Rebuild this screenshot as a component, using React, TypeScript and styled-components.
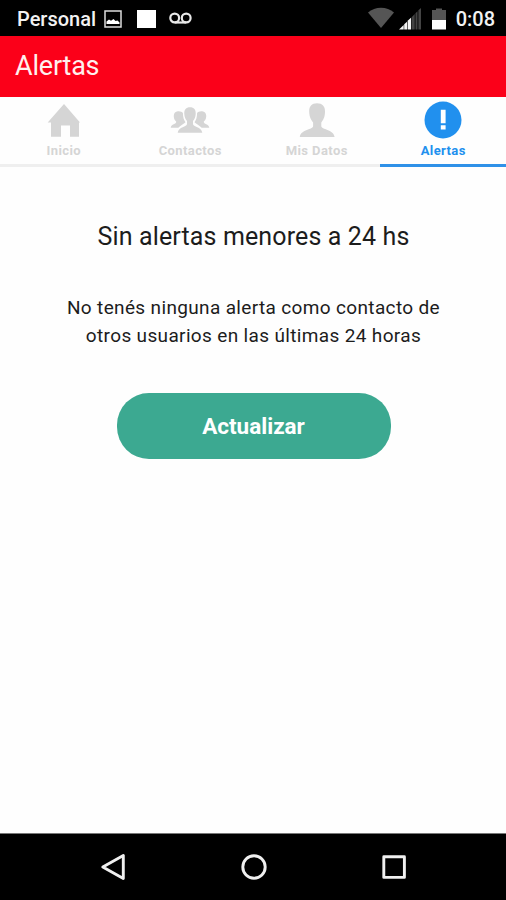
import React from "react";
import styled, { createGlobalStyle } from "styled-components";

const GlobalStyle = createGlobalStyle`
  * { box-sizing: border-box; }
  body { margin: 0; background: #fff; font-family: Roboto, sans-serif; }
`;

const Screen = styled.div`
  display: flex;
  flex-direction: column;
  width: 506px;
  height: 900px;
  overflow: hidden;
  background: #fefefe;
`;

const StatusBar = styled.div`
  display: flex;
  align-items: center;
  justify-content: space-between;
  height: 36px;
  flex: none;
  padding: 1px 11px 0 17px;
  background: #000;
  color: #f2f2f2;
`;

const StatusGroup = styled.div`
  display: flex;
  align-items: center;
`;

const StatusText = styled.span<{ $size: number; $gap?: number }>`
  margin-left: ${(p) => p.$gap ?? 0}px;
  font-size: ${(p) => p.$size}px;
  line-height: 24px;
  font-weight: 500;
  white-space: nowrap;
`;

const StatusIcon = styled.svg<{ $gap: number }>`
  display: block;
  flex: none;
  margin-left: ${(p) => p.$gap}px;
`;

const AppBar = styled.header`
  height: 61px;
  flex: none;
  padding: 14px 15px 0;
  background: #fb0019;
  color: #fff0ee;
  font-size: 27px;
  line-height: 32px;
  letter-spacing: -0.2px;
`;

const Tabs = styled.nav`
  display: grid;
  grid-template-columns: repeat(4, 1fr);
  height: 70px;
  flex: none;
`;

const Tab = styled.div<{ $active?: boolean }>`
  display: flex;
  flex-direction: column;
  align-items: center;
  padding: 3px 0 0 1px;
  color: ${(p) => (p.$active ? "#2190ee" : "#d5d5d5")};
  box-shadow: inset 0 -3px ${(p) => (p.$active ? "#2f91e8" : "#efefef")};
`;

const TabIcon = styled.svg`
  display: block;
  width: 40px;
  height: 40px;
  fill: currentColor;
`;

const TabLabel = styled.span`
  margin-top: 3px;
  font-size: 13px;
  line-height: 16px;
  font-weight: 700;
  letter-spacing: 0.4px;
`;

const Content = styled.main`
  display: flex;
  flex: 1;
  flex-direction: column;
  align-items: center;
  padding: 55px 0 0 1px;
  color: #1c1c1c;
`;

const Title = styled.h1`
  margin: 0;
  font-size: 25px;
  line-height: 30px;
  font-weight: 400;
  letter-spacing: 0.13px;
`;

const Message = styled.p`
  margin: 42px 0 0;
  font-size: 19px;
  line-height: 28px;
  letter-spacing: 0.35px;
  text-align: center;
`;

const RefreshButton = styled.button`
  width: 274px;
  height: 66px;
  margin: 43px 0 0;
  padding: 0;
  border: 0;
  border-radius: 32px;
  background: #3ca991;
  color: #fff;
  font: 700 22.5px/66px Roboto, sans-serif;
`;

const NavigationBar = styled.footer`
  display: flex;
  align-items: center;
  justify-content: space-between;
  height: 67px;
  flex: none;
  padding: 0 98px 0 100px;
  border-top: 1px solid #777;
  background: #000;
`;

const NavIcon = styled.svg`
  display: block;
  width: 28px;
  height: 28px;
  fill: none;
  stroke: #f0f0f0;
  stroke-width: 2.9;
  stroke-linejoin: round;
`;

const HomeGlyph = () => (
  <TabIcon viewBox="0 0 40 40">
    <path d="M20 4 36 22.5H35V36.7H26V25.5H17V36.7H7V22.5H3.7Z" />
  </TabIcon>
);

const ContactsGlyph = () => (
  <TabIcon viewBox="0 0 40 40">
    <path d="M20 7.3c3.9 0 6 2.3 5.7 6.7-.2 3.5-1.4 5.3-2.7 7.1v3c0 2.6 8.5 3 9.3 8.6H7.7c.8-5.6 9.3-6 9.3-8.6v-3c-1.3-1.8-2.5-3.6-2.7-7.1C14 9.6 16.1 7.3 20 7.3Z" />
    <path d="M7.8 11.2c2.2-.3 4.2.4 5.1 1.8.1 4 .7 6.8 2.6 9.2-1.7 2-5.1 3-7.2 5.6H.7c.4-4 5.8-3.3 5.5-6.2-2-1.8-2.6-4-2.4-6.1.2-2.7 1.6-4.1 4-4.3Z" />
    <path d="M32.2 11.2c-2.2-.3-4.2.4-5.1 1.8-.1 4-.7 6.8-2.6 9.2 1.7 2 5.1 3 7.2 5.6h7.6c-.4-4-5.8-3.3-5.5-6.2 2-1.8 2.6-4 2.4-6.1-.2-2.7-1.6-4.1-4-4.3Z" />
  </TabIcon>
);

const PersonGlyph = () => (
  <TabIcon viewBox="0 0 40 40">
    <path d="M20 3.2c5.3 0 8.2 3 8 8.5-.1 5.4-1.8 8.4-3.7 10.7v3.9c0 3.4 12.2 2.8 13.3 10.7H2.8c1.1-7.9 13.3-7.3 13.3-10.7v-3.9c-1.9-2.3-3.7-5.3-3.9-10.7-.2-5.5 2.5-8.5 7.8-8.5Z" />
  </TabIcon>
);

const AlertGlyph = () => (
  <TabIcon viewBox="0 0 40 40">
    <circle cx="20" cy="20" r="18.5" />
    <path fill="#fff" d="M17.8 9.7h4.8v13.5h-4.8zM17.8 25.3h4.8v4.2h-4.8z" />
  </TabIcon>
);

export default function App() {
  return (
    <>
      <GlobalStyle />
      <Screen>
        <StatusBar>
          <StatusGroup>
            <StatusText $size={20}>Personal</StatusText>
            <StatusIcon $gap={8} width="18" height="18" viewBox="0 0 18 18">
              <rect x="1" y="1" width="16" height="16" fill="none" stroke="#ddd" strokeWidth="1.5" />
              <path fill="#fff" d="M2.5 11.5 5 9.5l2 1.2L9.5 9l2 2 2-.5 2 2V14h-13Z" />
            </StatusIcon>
            <StatusIcon $gap={15} width="19" height="18" viewBox="0 0 19 18">
              <path fill="#fff" d="M0 0h19v18H0z" />
            </StatusIcon>
            <StatusIcon $gap={13} width="23" height="14" viewBox="0 0 23 14" fill="none" stroke="#e8e8e8" strokeWidth="2.2">
              <circle cx="5.7" cy="6" r="4.4" />
              <circle cx="17.2" cy="6" r="4.4" />
              <path d="M5.7 10.5h11.5" />
            </StatusIcon>
          </StatusGroup>
          <StatusGroup>
            <StatusIcon $gap={0} width="26" height="24" viewBox="0 0 26 24">
              <path fill="#555" d="M0 5.5C7-.9 19-.9 26 5.5L13 21Z" />
            </StatusIcon>
            <StatusIcon $gap={5} width="22" height="22" viewBox="0 0 22 22">
              <path fill="#444" d="M12.5 9.5 15.7 6v15.5h-3.2zM16.5 5.3l2-2.1v18.3h-2zM19.4 2.2 22 0v21.5h-2.6z" />
              <path fill="#f4f4f4" d="m0 21.5 4.7-4.4v4.4zM5.2 16.3l2.8-2.5v7.7H5.2zM8.6 12.8l3.4-3v11.7H8.6z" />
            </StatusIcon>
            <StatusIcon $gap={11} width="14" height="22" viewBox="0 0 14 22">
              <path fill="#555" d="M4 .5h6V2h4v10H0V2h4z" />
              <path fill="#fff" d="M0 12h14v9.5H0z" />
            </StatusIcon>
            <StatusText $size={20} $gap={10}>0:08</StatusText>
          </StatusGroup>
        </StatusBar>
        <AppBar>Alertas</AppBar>
        <Tabs>
          <Tab><HomeGlyph /><TabLabel>Inicio</TabLabel></Tab>
          <Tab><ContactsGlyph /><TabLabel>Contactos</TabLabel></Tab>
          <Tab><PersonGlyph /><TabLabel>Mis Datos</TabLabel></Tab>
          <Tab $active><AlertGlyph /><TabLabel>Alertas</TabLabel></Tab>
        </Tabs>
        <Content>
          <Title>Sin alertas menores a 24 hs</Title>
          <Message>
            No tenés ninguna alerta como contacto de
            <br />
            otros usuarios en las últimas 24 horas
          </Message>
          <RefreshButton>Actualizar</RefreshButton>
        </Content>
        <NavigationBar>
          <NavIcon viewBox="0 0 28 28"><path d="M2.8 14 23.3 2.5V25.5Z" /></NavIcon>
          <NavIcon viewBox="0 0 28 28"><circle cx="14" cy="14" r="11.2" /></NavIcon>
          <NavIcon viewBox="0 0 28 28"><rect x="3.8" y="3.8" width="20.6" height="20.6" /></NavIcon>
        </NavigationBar>
      </Screen>
    </>
  );
}
